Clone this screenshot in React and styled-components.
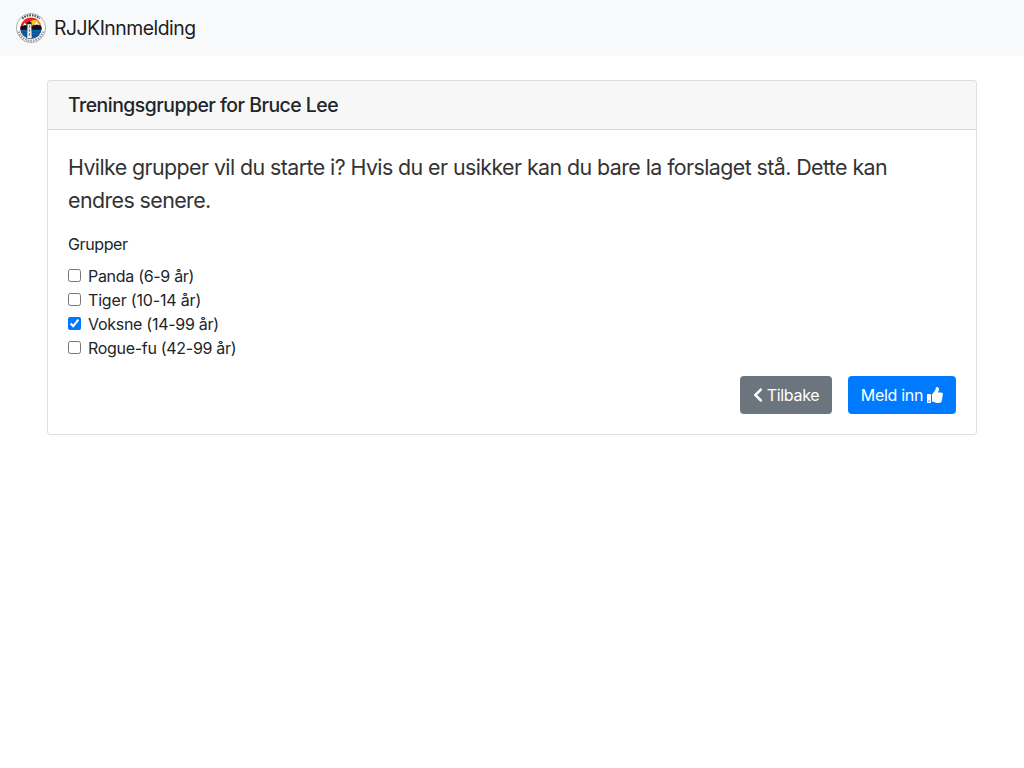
import React from "react";
import styled, { createGlobalStyle } from "styled-components";
import { FaChevronLeft, FaThumbsUp } from "react-icons/fa";

const GlobalStyle = createGlobalStyle`
  *, *::before, *::after { box-sizing: border-box; }
  body {
    margin: 0;
    background: #fff;
    color: #212529;
    font: 400 16px/1.5 Inter, "Liberation Sans", sans-serif;
  }
`;

const Navbar = styled.nav`
  display: flex;
  align-items: center;
  height: 56px;
  padding: 8px 16px;
  background: #f8f9fa;
`;

const Brand = styled.a`
  display: flex;
  align-items: center;
  gap: 8px;
  color: rgba(0, 0, 0, 0.9);
  font-size: 19.4px;
  line-height: 30px;
  letter-spacing: -0.5px;
`;

const Container = styled.main`
  max-width: 960px;
  margin: 24px auto 0;
  padding: 0 15px;
`;

const Card = styled.section`
  border: 1px solid rgba(0, 0, 0, 0.125);
  border-radius: 4px;
  background: #fff;
`;

const CardHeader = styled.header`
  padding: 12px 20px;
  border-bottom: 1px solid rgba(0, 0, 0, 0.125);
  border-radius: 3px 3px 0 0;
  background: rgba(0, 0, 0, 0.03);
`;

const Title = styled.h5`
  margin: 0;
  font-size: 19.4px;
  font-weight: 550;
  line-height: 24px;
  letter-spacing: -0.5px;
`;

const CardBody = styled.form`
  padding: 21px 20px 20px;
`;

const Lead = styled.p`
  margin: 0 0 15px;
  color: #333;
  font-size: 21.4px;
  line-height: 33px;
  letter-spacing: -0.59px;
  word-spacing: 0.05px;
`;

const Label = styled.div`
  margin-bottom: 8px;
  letter-spacing: -0.38px;
`;

const Option = styled.label`
  display: flex;
  align-items: flex-start;
  gap: 7px;
  height: 24px;
  letter-spacing: ${(p) => p.$tracking}px;
`;

const Checkbox = styled.input`
  flex: none;
  width: 13px;
  height: 13px;
  margin: 5px 0 0;
`;

const Actions = styled.div`
  display: flex;
  justify-content: flex-end;
  gap: 16px;
  margin-top: 16px;
`;

const Button = styled.button`
  display: flex;
  align-items: center;
  justify-content: center;
  gap: 4px;
  width: ${(p) => p.$width}px;
  height: 38px;
  padding: 0;
  border: 0;
  border-radius: 4px;
  background: ${(p) => (p.$primary ? "#007bff" : "#6c757d")};
  color: #fff;
  font: inherit;
  letter-spacing: -0.3px;
`;

const BackIcon = styled(FaChevronLeft)`
  width: 10px;
  height: 16px;
`;

const LogoSvg = styled.svg`
  flex: none;
  width: 30px;
  height: 30px;
`;

function Logo() {
  return (
    <LogoSvg viewBox="0 0 30 30">
      <defs>
        <clipPath id="disc">
          <circle cx="15" cy="15.2" r="10.6" />
        </clipPath>
      </defs>
      <circle cx="15" cy="15" r="14.6" fill="#fff" stroke="#8a8a8a" strokeWidth="0.7" />
      <path d="M6.3 5.7 A12.7 12.7 0 0 1 23.7 5.7" fill="none" stroke="#555" strokeWidth="2.2" strokeDasharray="1.7 0.9" />
      <path d="M2.8 18.5 A12.7 12.7 0 0 0 27.2 18.5" fill="none" stroke="#999" strokeWidth="2.2" strokeDasharray="1.6 1" />
      <g clipPath="url(#disc)">
        <rect width="30" height="30" fill="#ee2029" />
        <path d="M14 8.5 Q18 6 23 7 L28 9 V18 H13 V11Z" fill="#f9961a" />
        <circle cx="18.5" cy="10.5" r="3.4" fill="#ffc51d" />
        <path d="M3 15 L6.5 12 L9.5 10.6 L12 13 L15 13.6 L18 11.5 L20.5 9.8 L23 12 L27 13.5 V17.5 H3Z" fill="#111" />
        <path d="M6.4 13 L8.8 9.8 L11 12.4 L9 11.9Z M17.4 12.4 L20.5 8.8 L23.2 12.2 L20.5 11.4Z" fill="#fff" />
        <rect y="16.8" width="30" height="14" fill="#0a63b4" />
        <path d="M3 19.3H27 M4 22.4H26" stroke="#08407a" strokeWidth="0.6" />
      </g>
      <path d="M10.8 9.6 L13 8.2 L15.6 9.6 V11.5 H10.8Z" fill="#222" />
      <path d="M11.3 11 H15.4 L16 25.5 H11Z" fill="#eee" stroke="#333" strokeWidth="0.4" />
      <path d="M13.5 12.6V14.6 M13.5 16.4V18.4 M13.5 20.2V22.4" stroke="#666" strokeWidth="1.1" />
    </LogoSvg>
  );
}

const groups = [
  { name: "Panda (6-9 år)", tracking: -0.3 },
  { name: "Tiger (10-14 år)", tracking: -0.17 },
  { name: "Voksne (14-99 år)", tracking: -0.28, checked: true },
  { name: "Rogue-fu (42-99 år)", tracking: -0.3 },
];

export default function App() {
  return (
    <>
      <GlobalStyle />
      <Navbar>
        <Brand>
          <Logo />
          RJJKInnmelding
        </Brand>
      </Navbar>
      <Container>
        <Card>
          <CardHeader>
            <Title>Treningsgrupper for Bruce Lee</Title>
          </CardHeader>
          <CardBody>
            <Lead>
              Hvilke grupper vil du starte i? Hvis du er usikker kan du bare la
              forslaget stå. Dette kan endres senere.
            </Lead>
            <Label>Grupper</Label>
            {groups.map((g) => (
              <Option key={g.name} $tracking={g.tracking}>
                <Checkbox type="checkbox" defaultChecked={g.checked} />
                {g.name}
              </Option>
            ))}
            <Actions>
              <Button type="button" $width={92}>
                <BackIcon />
                Tilbake
              </Button>
              <Button type="button" $width={108} $primary>
                Meld inn
                <FaThumbsUp size={16} />
              </Button>
            </Actions>
          </CardBody>
        </Card>
      </Container>
    </>
  );
}
